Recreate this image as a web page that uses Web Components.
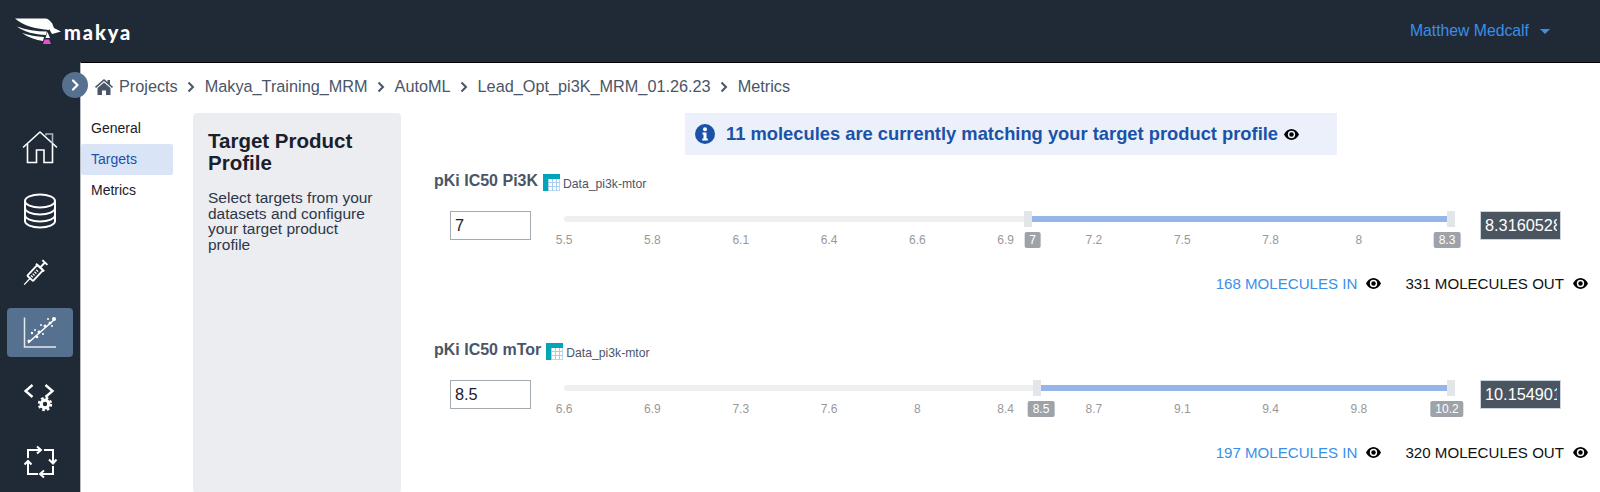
<!DOCTYPE html>
<html>
<head>
<meta charset="utf-8">
<title>Makya</title>
<style>
  html, body { margin: 0; height: 492px; overflow: hidden; background: #fff; font-family: "Liberation Sans", Arial, sans-serif; }
</style>
</head>
<body>
<makya-app>
  <makya-header slot="header" user="Matthew Medcalf"></makya-header>
  <makya-sidebar slot="sidebar"></makya-sidebar>
  <makya-breadcrumb slot="crumbs" items="Projects|Makya_Training_MRM|AutoML|Lead_Opt_pi3K_MRM_01.26.23|Metrics"></makya-breadcrumb>
  <makya-tabs slot="tabs" items="General|Targets|Metrics" active="Targets"></makya-tabs>
  <profile-card slot="card" heading="Target Product Profile">Select targets from your datasets and configure your target product profile</profile-card>
  <match-banner slot="content">11 molecules are currently matching your target product profile</match-banner>
  <target-row slot="content" heading="pKi IC50 Pi3K" dataset="Data_pi3k-mtor" value="7" output="8.316052812"
    ticks="5.5|5.8|6.1|6.4|6.6|6.9|7.2|7.5|7.8|8" low="460" from="7" from-at="468.5" to="8.3" to-at="883"
    in="168" out="331"></target-row>
  <target-row slot="content" heading="pKi IC50 mTor" dataset="Data_pi3k-mtor" value="8.5" output="10.154901959"
    ticks="6.6|6.9|7.3|7.6|8|8.4|8.7|9.1|9.4|9.8" low="469" from="8.5" from-at="477" to="10.2" to-at="883"
    in="197" out="320"></target-row>
</makya-app>

<script>
const eyeIcon = `<svg width="15" height="11" viewBox="0 0 15 11"><path fill="#000" fill-rule="evenodd" d="M7.500 0C4.300 0 1.600 2.200 0 5.500 1.600 8.800 4.300 11 7.500 11S13.400 8.800 15 5.500C13.400 2.200 10.700 0 7.500 0zm0 1.800a3.700 3.700 0 1 1 0 7.400 3.700 3.700 0 0 1 0-7.400z"/><circle cx="7.500" cy="5.500" r="2.200" fill="#000"/></svg>`;
const tableIcon = `<svg width="17" height="17" viewBox="0 0 17 17"><rect width="17" height="17" fill="#cfe3f7"/><rect x=".5" y=".5" width="16" height="16" fill="#fff" stroke="#bcd9f3"/><path stroke="#a9cdf0" stroke-width="1" d="M5.500 5v12M9.500 5v12M13.500 5v12M0 8.500h17M0 12.500h17"/><path fill="#00a5b8" d="M0 0h17v5H5v12H0z"/></svg>`;

class MakyaApp extends HTMLElement {
  constructor() {
    super();
    this.attachShadow({ mode: "open" });
    this.shadowRoot.innerHTML = `
      <style>
        :host { display: grid; grid-template-columns: 80px 1fr; grid-template-rows: 62px 430px; width: 1600px; height: 492px; background: #202a37; }
        .top { grid-column: 1 / 3; }
        main { position: relative; background: #fff; border-top: 1px solid #000; border-left: 1px solid #b9bcc0; box-sizing: border-box; min-width: 0; }
        .toggle { position: absolute; left: -19px; top: 9px; width: 26px; height: 26px; border-radius: 50%; background: #56708f; display: flex; align-items: center; justify-content: center; }
        .body { display: flex; align-items: stretch; height: 380px; }
        .body ::slotted(makya-tabs) { margin-right: 20px; }
        .content { flex: 1; min-width: 0; }
      </style>
      <div class="top"><slot name="header"></slot></div>
      <slot name="sidebar"></slot>
      <main>
        <div class="toggle"><svg width="10" height="12" viewBox="0 0 10 12"><path d="M3 1.500 7.500 6 3 10.500" fill="none" stroke="#fff" stroke-width="2.200" stroke-linecap="round" stroke-linejoin="round"/></svg></div>
        <slot name="crumbs"></slot>
        <div class="body">
          <slot name="tabs"></slot>
          <slot name="card"></slot>
          <div class="content"><slot name="content"></slot></div>
        </div>
      </main>`;
  }
}

class MakyaHeader extends HTMLElement {
  constructor() {
    super();
    this.attachShadow({ mode: "open" });
  }
  connectedCallback() {
    this.shadowRoot.innerHTML = `
      <style>
        :host { display: flex; align-items: center; justify-content: space-between; height: 62px; padding: 0 50px 0 15px; box-sizing: border-box; }
        .brand { display: flex; align-items: center; gap: 3px; margin-top: -1px; }
        .word { font: 900 20px Lato, "Liberation Sans", sans-serif; letter-spacing: 1.900px; color: #fff; margin-top: 3px; }
        .user { display: flex; align-items: center; gap: 11px; font-size: 15.750px; color: #3a8fe8; }
        .caret { width: 0; height: 0; border: 5px solid transparent; border-top: 5px solid #3a8fe8; border-bottom: 0; }
      </style>
      <div class="brand">
        <svg width="46" height="26" viewBox="0 0 46 26">
          <path fill="#fff" d="M0 .5H30c3 0 5.500 2 6.500 5L34 12C22 11 8 8 0 .5z"/>
          <path fill="#fff" d="M2 8.500c9 3.500 19 5 30 5l-1 3.500C20 16.500 9 14 2 8.500z"/>
          <path fill="#fff" d="M7 15c7 2.500 14 3.500 22 4l-1 4c-7-1-15-3.500-21-8z"/>
          <path fill="#fff" d="M34 3l3 2 2 5 7 3.500-7 2-2 .5-4-7z"/>
          <path fill="#fff" d="M32.500 14 35 20h-4.500z"/>
          <path fill="#e64fd0" d="M29.500 21.500h4.500l2 4.500h-8z"/>
        </svg>
        <span class="word">makya</span>
      </div>
      <div class="user">${this.getAttribute("user")}<span class="caret"></span></div>`;
  }
}

class MakyaSidebar extends HTMLElement {
  constructor() {
    super();
    this.attachShadow({ mode: "open" });
    this.shadowRoot.innerHTML = `
      <style>
        :host { display: flex; flex-direction: column; align-items: center; padding-top: 60px; box-sizing: border-box; }
        a { display: flex; align-items: center; justify-content: center; width: 66px; height: 49px; border-radius: 4px; flex: none; }
        a + a { margin-top: 12px; }
        a:nth-of-type(2), a:nth-of-type(5), a:nth-of-type(6) { margin-top: 15px; }
        .on { background: #56708f; }
        svg { fill: none; stroke: #fff; stroke-width: 1.600; }
      </style>
      <a><svg width="36" height="34" viewBox="0 0 36 34"><path stroke-linejoin="round" stroke-linecap="round" d="M1.500 17 18 2l16.500 15"/><path d="M5.500 14v18.500h9V20h7.500v12.500h8.500V14"/><path stroke="#aab2bb" d="M24 5.500V4h6.500v9"/></svg></a>
      <a><svg width="32" height="36" viewBox="0 0 32 36" style="stroke-width:2"><ellipse cx="16" cy="8" rx="15" ry="6.500"/><path d="M1 8v20c0 3.600 6.700 6.500 15 6.500S31 31.600 31 28V8"/><path d="M1 15c0 3.600 6.700 6.500 15 6.500S31 18.600 31 15M1 22c0 3.600 6.700 6.500 15 6.500S31 25.600 31 22"/></svg></a>
      <a><svg width="26" height="28" viewBox="-15 -16 30 32" style="margin-right:8px"><g transform="rotate(-47)"><path stroke-width="1.500" d="M-20 0h11"/><rect x="-10" y="-4.500" width="17" height="9" rx="1" stroke-width="2.200"/><path stroke-width="1.500" d="M-7 -1.500v3M-4 -1.500v3M-1 -1.500v3M2 -1.500v3"/><path stroke-width="2.200" d="M7 -6.500v13M7 0h8M15 -4v8"/></g></svg></a>
      <a class="on"><svg width="34" height="34" viewBox="0 0 34 34"><path d="M1.500 1.500V31H33" stroke="#e4e9ef" stroke-width="1.500"/><path d="M5 27 32 3" stroke-width="1.500"/><g fill="#fff" stroke="none"><circle cx="6" cy="25" r="1.500"/><circle cx="9" cy="17" r="1.200"/><circle cx="12" cy="14" r="1"/><circle cx="14" cy="21" r="1.300"/><circle cx="18" cy="9" r="1"/><circle cx="20" cy="18" r="1"/><circle cx="22" cy="10" r="1.500"/><circle cx="27" cy="7" r="1.500"/><circle cx="31" cy="3" r="2"/><circle cx="16" cy="16" r="1.400"/><circle cx="29" cy="10" r="1"/><circle cx="25" cy="3" r="1"/></g></svg></a>
      <a><svg width="32" height="28" viewBox="0 0 32 28" style="margin-top:2px"><path stroke-width="2.400" d="M8.500 1 1.500 7l7 6M21.500 1l7 6-7 6"/><circle cx="21" cy="20" r="3.800" stroke-width="3.200"/><circle cx="21" cy="20" r="6" stroke-width="2.400" stroke-dasharray="2.600 2.110"/></svg></a>
      <a><svg width="32" height="32" viewBox="0 0 32 32" style="stroke-width:2;margin-left:2px;overflow:visible"><path d="M3 13V5h13M12 1.500 16 5l-4 3.500"/><path d="M19 5h9v13M24 14.500l4 4 3.500-4"/><path d="M28 21v8H15M19 25.500 15 29l4 3.500" /><path d="M13 29H3V16M-.500 19.500 3 16l3.500 3.500"/></svg></a>`;
  }
}

class MakyaBreadcrumb extends HTMLElement {
  constructor() {
    super();
    this.attachShadow({ mode: "open" });
  }
  connectedCallback() {
    const items = this.getAttribute("items").split("|");
    const chevron = `<svg class="sep" width="8" height="12" viewBox="0 0 8 12"><path d="M1.500 1.500 6 6l-4.500 4.500" fill="none" stroke="#4a5568" stroke-width="2"/></svg>`;
    this.shadowRoot.innerHTML = `
      <style>
        :host { display: flex; align-items: center; height: 50px; padding: 0 0 3px 14px; box-sizing: border-box; font-size: 16.250px; color: #4a5568; }
        .home { margin-right: 6px; }
        .sep { margin: 0 9.500px; }
      </style>
      <svg class="home" width="18" height="16" viewBox="0 0 18 16"><path fill="#4a5568" d="M9 0 0 7.800l1 1.100L9 2l8 6.900 1-1.100-3-2.600V1h-2.500v2.100z"/><path fill="#4a5568" d="M9 3.500 2.500 9v7h4.500v-4.500h4V16h4.500V9z"/></svg>
      ${items.map(i => `<span>${i}</span>`).join(chevron)}`;
  }
}

class MakyaTabs extends HTMLElement {
  constructor() {
    super();
    this.attachShadow({ mode: "open" });
  }
  connectedCallback() {
    const active = this.getAttribute("active");
    this.shadowRoot.innerHTML = `
      <style>
        :host { display: block; width: 92px; flex: none; font-size: 14px; color: #1a202c; }
        div { height: 31px; line-height: 30px; padding-left: 10px; border-radius: 2px; }
        div:first-child { line-height: 32px; }
        .on { background: #d9e4f7; color: #1a52a8; }
      </style>
      ${this.getAttribute("items").split("|").map(i => `<div class="${i === active ? "on" : ""}">${i}</div>`).join("")}`;
  }
}

class ProfileCard extends HTMLElement {
  constructor() {
    super();
    this.attachShadow({ mode: "open" });
  }
  connectedCallback() {
    this.shadowRoot.innerHTML = `
      <style>
        :host { display: block; width: 208px; flex: none; box-sizing: border-box; padding: 17px 15px; background: #ecedf0; border-radius: 4px; }
        h2 { margin: 0 0 16px; font-size: 20.500px; line-height: 22px; font-weight: 700; color: #1a202c; }
        p { margin: 0; max-width: 172px; font-size: 15.500px; line-height: 15.500px; color: #2d3748; }
      </style>
      <h2>${this.getAttribute("heading")}</h2>
      <p><slot></slot></p>`;
  }
}

class MatchBanner extends HTMLElement {
  constructor() {
    super();
    this.attachShadow({ mode: "open" });
    this.shadowRoot.innerHTML = `
      <style>
        :host { display: flex; align-items: center; gap: 11px; width: 652px; height: 42px; margin-left: 284px; padding-left: 10px; box-sizing: border-box; background: #ebf0fa; font-size: 18.340px; font-weight: 700; color: #1a52a8; }
        svg { flex: none; }
        .eye { margin-left: -5px; display: flex; }
      </style>
      <svg width="20" height="20" viewBox="0 0 20 20"><circle cx="10" cy="10" r="10" fill="#1a52a8"/><circle cx="10" cy="5.200" r="2" fill="#fff"/><path fill="#fff" d="M7.500 8.500h4v6h1.300v2H7.300v-2h1.200v-4h-1z"/></svg>
      <span><slot></slot></span>
      <span class="eye">${eyeIcon}</span>`;
  }
}

class TargetRow extends HTMLElement {
  constructor() {
    super();
    this.attachShadow({ mode: "open" });
  }
  connectedCallback() {
    const a = n => this.getAttribute(n);
    const ticks = a("ticks").split("|").map(t => `<span>${t}</span>`).join("");
    this.shadowRoot.innerHTML = `
      <style>
        :host { display: block; height: 169px; padding: 15px 0 0 33px; box-sizing: border-box; }
        .head { display: flex; align-items: center; height: 21px; gap: 5px; }
        h3 { margin: 0; font-size: 16px; font-weight: 700; color: #4a5568; }
        .data { display: flex; gap: 3px; align-items: flex-end; font-size: 12.200px; color: #4a5568; margin-top: 3px; }
        .data span { line-height: 14px; }
        .controls { display: flex; margin-top: 20px; padding-left: 16px; gap: 33px; }
        .box { width: 81px; height: 29px; box-sizing: border-box; font-size: 16.300px; line-height: 27px; padding-left: 4px; flex: none; }
        .value { border: 1px solid #a3aab0; color: #1a202c; background: #fff; }
        .output { border: 1px solid #cbd5e0; background: #4a5560; color: #fff; margin-left: -8px; padding-right: 3px; }
        .output span { display: block; overflow: hidden; white-space: nowrap; }
        .slider { position: relative; width: 891px; flex: none; }
        .track { display: flex; align-items: center; height: 16px; }
        .rest { height: 6px; background: #eeeff1; border-radius: 3px 0 0 3px; }
        .fill { height: 6px; background: #95b5e8; flex: 1; }
        .handle { width: 8px; height: 16px; background: #e2e5e9; flex: none; }
        .ticks { display: grid; grid-template-columns: repeat(11, 88.300px); margin: 6px 0 0 -44px; font-size: 12px; line-height: 14px; color: #999; text-align: center; }
        .pin { position: absolute; top: 21px; height: 16px; line-height: 16px; padding: 0 5px; transform: translateX(-50%); background: #9ea3a9; color: #fff; font-size: 12px; border-radius: 2px; }
        .counts { display: flex; justify-content: flex-end; align-items: center; height: 16px; margin: 28px 12px 0 0; font-size: 15.100px; color: #111; }
        .counts svg { margin-left: 9px; }
        .in { color: #3a8fe8; }
        .out { margin-left: 24px; }
      </style>
      <div class="head">
        <h3>${a("heading")}</h3>
        <div class="data">${tableIcon}<span>${a("dataset")}</span></div>
      </div>
      <div class="controls">
        <div class="box value">${a("value")}</div>
        <div class="slider">
          <div class="track">
            <div class="rest" style="width:${a("low")}px"></div>
            <div class="handle"></div>
            <div class="fill"></div>
            <div class="handle"></div>
          </div>
          <div class="ticks">${ticks}</div>
          <span class="pin" style="left:${a("from-at")}px">${a("from")}</span>
          <span class="pin" style="left:${a("to-at")}px">${a("to")}</span>
        </div>
        <div class="box output"><span>${a("output")}</span></div>
      </div>
      <div class="counts">
        <span class="in">${a("in")} MOLECULES IN</span>${eyeIcon}
        <span class="out">${a("out")} MOLECULES OUT</span>${eyeIcon}
      </div>`;
  }
}

customElements.define("makya-app", MakyaApp);
customElements.define("makya-header", MakyaHeader);
customElements.define("makya-sidebar", MakyaSidebar);
customElements.define("makya-breadcrumb", MakyaBreadcrumb);
customElements.define("makya-tabs", MakyaTabs);
customElements.define("profile-card", ProfileCard);
customElements.define("match-banner", MatchBanner);
customElements.define("target-row", TargetRow);
</script>
</body>
</html>
